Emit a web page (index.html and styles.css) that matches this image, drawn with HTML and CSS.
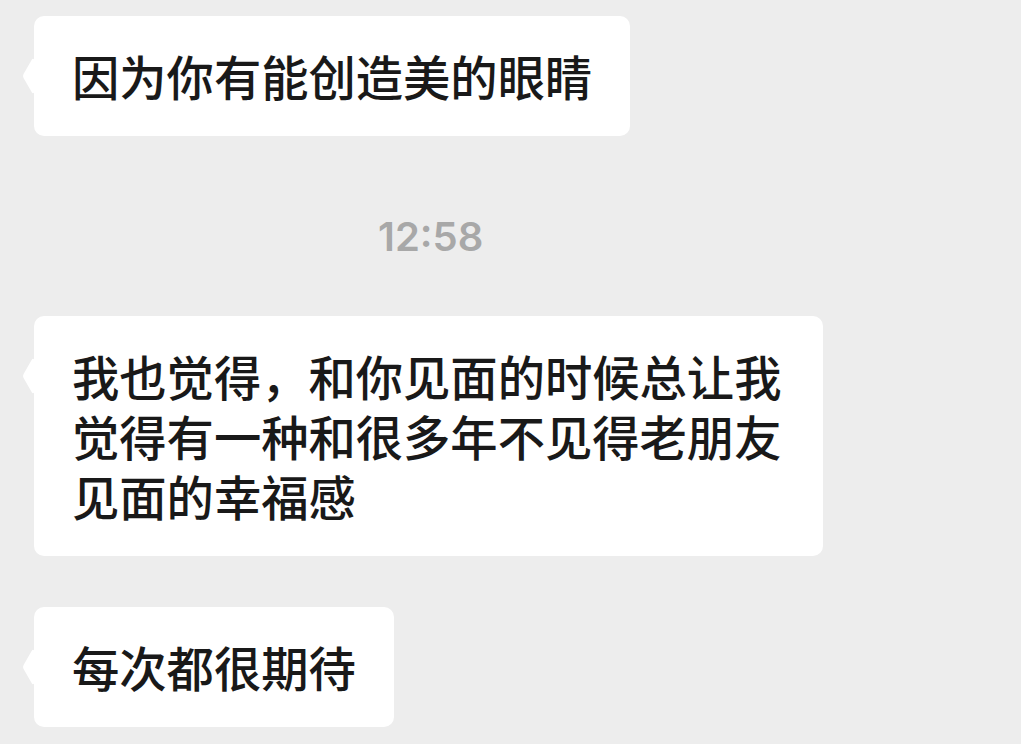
FILE: index.html
```html
<!DOCTYPE html>
<html lang="zh-CN">
<head>
<meta charset="utf-8">
<title>Chat</title>
<link rel="stylesheet" href="styles.css">
</head>
<body>
<main class="chat">
  <div class="msg">
    <div class="bubble">因为你有能创造美的眼睛</div>
  </div>
  <div class="time">12:58</div>
  <div class="msg">
    <div class="bubble wide">我也觉得，和你见面的时候总让我觉得有一种和很多年不见得老朋友见面的幸福感</div>
  </div>
  <div class="msg gap">
    <div class="bubble">每次都很期待</div>
  </div>
</main>
</body>
</html>
```
FILE: styles.css
```css
html, body {
  margin: 0;
  padding: 0;
  background: #ededed;
}
body {
  width: 1021px;
  height: 744px;
  overflow: hidden;
}
.chat {
  display: flex;
  flex-direction: column;
  align-items: flex-start;
  padding: 16px 0 0 34px;
}
.msg {
  display: flex;
}
.msg.gap {
  margin-top: 51px;
}
.bubble {
  position: relative;
  background: #ffffff;
  border-radius: 10px;
  padding: 30px 38px;
  font-family: "Noto Sans CJK SC", "Noto Sans", sans-serif;
  font-weight: 500;
  font-size: 47.3px;
  line-height: 60px;
  color: #191919;
}
.bubble.wide {
  width: 713px;
}
.bubble::before {
  content: "";
  position: absolute;
  left: -14px;
  top: 47px;
  width: 26px;
  height: 26px;
  background: #ffffff;
  border-radius: 3px;
  transform: scaleX(0.58) rotate(45deg);
  transform-origin: center;
}
.time {
  align-self: flex-start;
  margin: 71px 0 49px 344px;
  height: 60px;
  line-height: 60px;
  font-family: Inter, "Liberation Sans", sans-serif;
  font-weight: 600;
  font-size: 40px;
  color: #a8a8a8;
}
```
